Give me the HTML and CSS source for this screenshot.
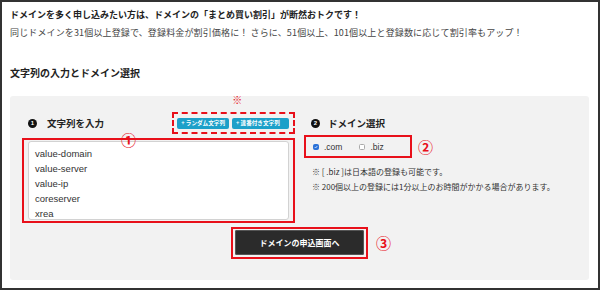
FILE: index.html
```html
<!DOCTYPE html>
<html lang="ja">
<head>
<meta charset="utf-8">
<link rel="stylesheet" href="styles.css">
</head>
<body>
<div class="frame">
  <p class="lead">ドメインを多く申し込みたい方は、ドメインの「まとめ買い割引」が断然おトクです！</p>
  <p class="sub">同じドメインを31個以上登録で、登録料金が割引価格に！ さらに、51個以上、101個以上と登録数に応じて割引率もアップ！</p>
  <h2 class="heading">文字列の入力とドメイン選択</h2>
  <div class="panel">
    <div class="cols">
      <div class="col-left">
        <div class="head-row">
          <div class="step"><span class="num">1</span><span>文字列を入力</span></div>
          <div class="gen-box">
            <span class="kome">※</span>
            <span class="gen-btn">+ ランダム文字列</span>
            <span class="gen-btn">+ 連番付き文字列</span>
          </div>
        </div>
        <div class="mark-box area-box">
          <span class="circ circ-1">①</span>
          <div class="textarea">
            <div>value-domain</div>
            <div>value-server</div>
            <div>value-ip</div>
            <div>coreserver</div>
            <div>xrea</div>
          </div>
        </div>
      </div>
      <div class="col-right">
        <div class="head-row">
          <div class="step"><span class="num">2</span><span>ドメイン選択</span></div>
        </div>
        <div class="tld-row">
          <div class="mark-box tld-box">
            <label class="tld"><span class="cb cb-on"><svg viewBox="0 0 8 8" width="6" height="6"><path d="M1.5 4.2 L3.3 6 L6.6 2" fill="none" stroke="#fff" stroke-width="1.4"/></svg></span>.com</label>
            <label class="tld"><span class="cb"></span>.biz</label>
          </div>
          <span class="circ">②</span>
        </div>
        <p class="note">※ [ .biz ]は日本語の登録も可能です。</p>
        <p class="note">※ 200個以上の登録には1分以上のお時間がかかる場合があります。</p>
      </div>
    </div>
    <div class="submit-row">
      <div class="mark-box submit-box"><span class="submit">ドメインの申込画面へ</span></div>
      <span class="circ circ-3">③</span>
    </div>
  </div>
</div>
</body>
</html>
```
FILE: styles.css
```css
* { box-sizing: border-box; }
html, body { margin: 0; padding: 0; background: #fff; }
body { font-family: "Noto Sans CJK JP", "Liberation Sans", sans-serif; color: #222; }
.frame {
  width: 600px; height: 290px;
  border: 2px solid #333;
  padding: 4px 9px 0 8px;
}
.lead { margin: 0; font-size: 9px; font-weight: 700; line-height: 18px; color: #222; }
.sub { margin: 0; font-size: 9px; line-height: 18px; color: #444; letter-spacing: 0.14px; }
.heading { margin: 22px 0 0; font-size: 10px; font-weight: 700; line-height: 18px; color: #222; }
.panel {
  margin-top: 14px;
  height: 184px;
  background: #f2f2f2;
  border-radius: 3px;
  padding: 16px 0 0 12px;
}
.cols { display: flex; gap: 9px; }
.col-left { width: 273px; }
.col-right { flex: 1; }
.head-row { display: flex; justify-content: space-between; align-items: center; height: 22px; }
.step { display: flex; align-items: center; gap: 10px; padding-left: 6px; font-size: 9.5px; font-weight: 700; color: #222; }
.col-right .step { gap: 8px; padding-left: 7px; }
.num {
  width: 9px; height: 9px; border-radius: 50%;
  background: #111; color: #fff;
  font-family: "Liberation Sans", sans-serif;
  font-size: 6px; line-height: 9px; text-align: center; font-weight: 700;
}
.gen-box {
  position: relative;
  display: flex; align-items: center; gap: 3px;
  height: 22px; padding: 0 4px 0 3px;
  border: 2px dashed #e8101a;
}
.kome { position: absolute; left: 58px; top: -20px; color: #e8101a; font-size: 10px; line-height: 12px; }
.gen-btn {
  display: inline-block; height: 11px; line-height: 11px;
  padding: 0 4px;
  background: #1ca0c9; color: #fff; border-radius: 2px;
  font-size: 5.6px; font-weight: 700; white-space: nowrap;
}
.gen-btn:first-of-type { width: 59px; }
.gen-btn + .gen-btn { width: 57px; }
.mark-box { border: 2px solid #e8101a; }
.area-box { position: relative; margin-top: 4px; padding: 1px 4px 1px 4px; height: 85px; }
.circ { color: #e8101a; font-size: 15px; line-height: 16px; font-weight: 700; }
.circ-1 { position: absolute; left: 97px; top: -8px; }
.textarea {
  height: 79px;
  background: #fff; border: 1px solid #d2d2d2; border-radius: 3px;
  padding: 4px 6px;
  font-family: "Liberation Sans", "Noto Sans CJK JP", sans-serif;
  font-size: 9.5px; line-height: 15px; color: #333;
  overflow: hidden;
}
.tld-row { display: flex; align-items: center; gap: 6px; margin-top: 1px; }
.tld-box { width: 108px; height: 23px; display: flex; align-items: center; gap: 17px; padding-left: 7px; }
.tld { display: flex; align-items: center; gap: 5px; font-family: "Liberation Sans", sans-serif; font-size: 8.5px; color: #333; }
.cb {
  width: 6px; height: 6px; border-radius: 1.5px;
  border: 1px solid #aaa; background: #fff;
  display: flex; align-items: center; justify-content: center;
}
.cb-on { background: #2b72d8; border-color: #2b72d8; }
.cb svg { display: block; }
.note { margin: 0; padding-left: 8px; font-size: 8px; line-height: 15px; color: #333; }
.tld-row + .note { margin-top: 6px; }
.submit-row { display: flex; align-items: center; justify-content: center; margin-top: 4px; position: relative; padding-right: 12px; }
.submit-box { padding: 1px 2px 2px 2px; }
.submit {
  display: flex; align-items: center; justify-content: center;
  width: 129px; height: 25px;
  background: #2b2b2b; color: #fff; border-radius: 2px;
  box-shadow: inset 0 0 0 1px #555;
  font-size: 8px; font-weight: 700;
}
.circ-3 { position: absolute; left: 354px; top: 8px; }
```
